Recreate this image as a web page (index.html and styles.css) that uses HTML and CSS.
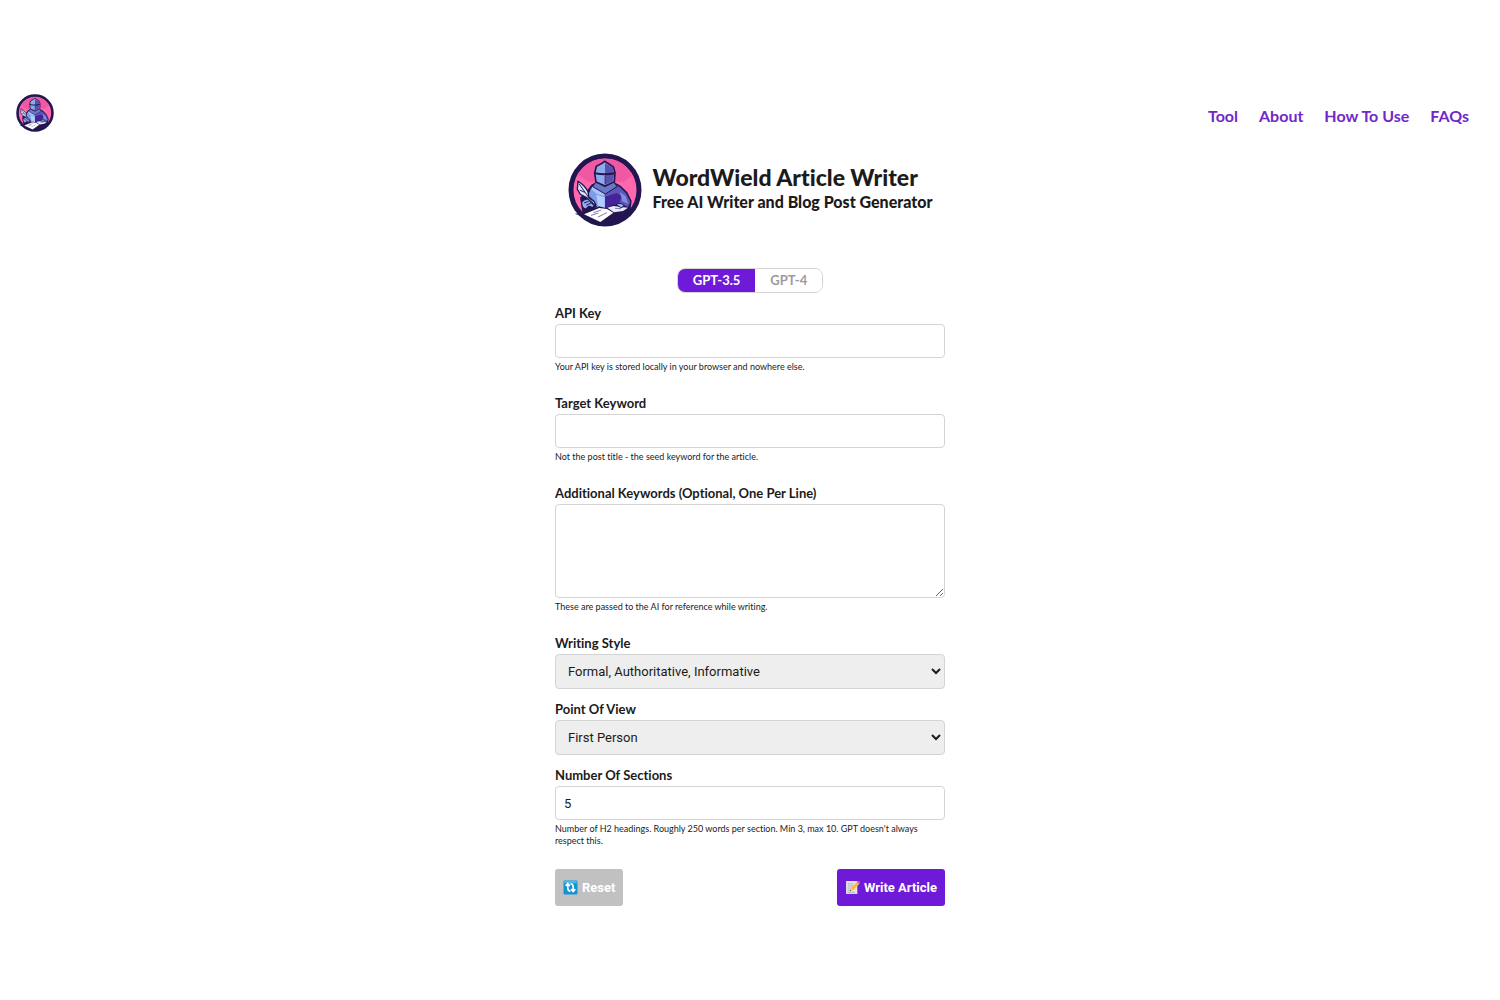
FILE: index.html
```html
<!DOCTYPE html>
<html lang="en">
<head>
<meta charset="UTF-8">
<meta name="viewport" content="width=device-width, initial-scale=1.0">
<title>WordWield Article Writer</title>
<link rel="stylesheet" href="styles.css">
</head>
<body>

<!-- scribe emblem, used in the header and next to the title -->
<svg class="sprite" aria-hidden="true">
  <symbol id="scribe" viewBox="22 24 222 222">
    <circle cx="133" cy="135" r="102" fill="#ff68ac" stroke="#231650" stroke-width="15"/>
    <path d="M50 88Q86 41 133 41Q190 41 214 92L190 110H82Z" fill="#f158a4"/>
    <path d="M58 158L77 140 92 119 108 110H158L180 122 200 142 213 168 208 205 154 214 66 207Z" fill="#231650"/>
    <path d="M94 126L108 116 132 133 132 188 111 187 94 164 84 149Z" fill="#a9c5fa"/>
    <path d="M91 132L108 146 133 154V188L105 188 95 165 83 153Z" fill="#7e9ce8"/>
    <path d="M107 149L132 157V188H113Z" fill="#b2ccff"/>
    <path d="M133 133L157 115 178 127 196 145 209 170 202 187 177 174 154 181 133 188Z" fill="#5e55b7"/>
    <path d="M133 155L168 144 183 153 175 176 133 190Z" fill="#43249a"/>
    <path d="M178 141L195 154 203 177 185 169Z" fill="#7e8fdd"/>
    <path d="M106 110L132 124 158 108 169 125 134 147 96 125Z" fill="#6977c9" stroke="#231650" stroke-width="3"/>
    <path d="M107 64Q124 56 132 49Q145 57 158 66L163 83 161 110 133 123 106 111 102 84Z" fill="#8faaeb" stroke="#231650" stroke-width="5"/>
    <path d="M133 55L156 67 160 84 158 108 133 119Z" fill="#5b50ab"/>
    <path d="M103 82Q132 88 161 82V88Q132 94 103 88Z" fill="#231650"/>
    <path d="M133 93V118" stroke="#231650" stroke-width="2"/>
    <path d="M63 170Q75 158 89 163L105 178 96 188 85 184 75 193Q61 188 63 170Z" fill="#91aff1" stroke="#231650" stroke-width="4"/>
    <path d="M70 174L84 169M76 181L91 174" stroke="#231650" stroke-width="3"/>
    <path d="M52 109Q71 119 82 140L84 155 101 170 107 187 94 175 80 159 59 148 50 133Z" fill="#dce8ff" stroke="#231650" stroke-width="4"/>
    <path d="M55 116L78 149 105 185M57 135L72 142" stroke="#231650" stroke-width="3" fill="none"/>
    <path d="M42 206L77 203 115 184 135 189 158 179 210 187 196 200 210 202 190 224 131 238 86 222Z" fill="#231650"/>
    <path d="M70 208L116 189 139 192 158 203 119 231Z" fill="#fff"/>
    <path d="M140 188L158 183 202 188 187 198 160 202Z" fill="#e5eaff"/>
    <path d="M98 203L122 195M91 211L113 204M112 216L139 203M163 190L181 191" stroke="#837bae" stroke-width="3"/>
    <path d="M166 178Q184 170 191 184L180 188Z" fill="#9baeea" stroke="#231650" stroke-width="3"/>
  </symbol>
</svg>

<header class="site-header">
  <a href="#tool" class="logo-link" aria-label="WordWield"><svg class="logo-small"><use href="#scribe"/></svg></a>
  <nav class="nav">
    <a href="#tool">Tool</a>
    <a href="#about">About</a>
    <a href="#how">How To Use</a>
    <a href="#faqs">FAQs</a>
  </nav>
</header>

<main id="tool">
  <div class="hero">
    <svg class="logo-big" aria-hidden="true"><use href="#scribe"/></svg>
    <div class="hero-text">
      <h1>WordWield Article Writer</h1>
      <h2>Free AI Writer and Blog Post Generator</h2>
    </div>
  </div>

  <form class="writer">
    <div class="model-switch">
      <button type="button" class="model active">GPT-3.5</button>
      <button type="button" class="model">GPT-4</button>
    </div>

    <div class="field with-note">
      <label for="apiKey">API Key</label>
      <input id="apiKey" type="password">
      <small>Your API key is stored locally in your browser and nowhere else.</small>
    </div>

    <div class="field with-note">
      <label for="keyword">Target Keyword</label>
      <input id="keyword" type="text">
      <small>Not the post title - the seed keyword for the article.</small>
    </div>

    <div class="field with-note">
      <label for="extra">Additional Keywords (Optional, One Per Line)</label>
      <textarea id="extra"></textarea>
      <small>These are passed to the AI for reference while writing.</small>
    </div>

    <div class="field">
      <label for="style">Writing Style</label>
      <select id="style">
        <option>Formal, Authoritative, Informative</option>
      </select>
    </div>

    <div class="field">
      <label for="pov">Point Of View</label>
      <select id="pov">
        <option>First Person</option>
      </select>
    </div>

    <div class="field with-note">
      <label for="sections">Number Of Sections</label>
      <input id="sections" type="number" min="3" max="10" value="5">
      <small>Number of H2 headings. Roughly 250 words per section. Min 3, max 10. GPT doesn't always respect this.</small>
    </div>

    <div class="actions">
      <button type="reset" class="btn btn-reset">
        <svg class="icon" viewBox="0 0 28 28" aria-hidden="true">
          <rect x="1" y="1" width="26" height="26" rx="2" fill="#1592d2"/>
          <path d="M2 4Q2 2 4 2H24Q26 2 26 4V6H2Z" fill="#46b9ed"/>
          <path d="M14 21Q9 21 9 15V9M5 11L9 6.500 13 11M14 7Q19 7 19 13V19M15 17L19 21.500 23 17" fill="none" stroke="#fff" stroke-width="3"/>
        </svg>
        Reset
      </button>
      <button type="button" class="btn btn-write">
        <svg class="icon" viewBox="0 0 28 28" aria-hidden="true">
          <path d="M2 2H23V26H2Z" fill="#e4e7ea"/>
          <path d="M5 7H16M5 11H15M5 15H12M5 19H10M5 23H19" stroke="#a0a8b5" stroke-width="1.500"/>
          <path d="M9 21L11 15 22 4 26 8 15 19Z" fill="#ffb52e"/>
          <path d="M22 4L24 2Q26 1 27 3T28 6L26 8Z" fill="#ef6287"/>
          <path d="M20.500 5.500L22 4 26 8 24.500 9.500Z" fill="#b8c3cc"/>
          <path d="M9 21L11 15 15 19Z" fill="#f3d7a2"/>
          <path d="M9 21L10 18 12 20Z" fill="#444"/>
        </svg>
        Write Article
      </button>
    </div>
  </form>
</main>

<script>
const models = document.querySelectorAll('.model');
models.forEach(m => m.addEventListener('click', () => {
  models.forEach(x => x.classList.remove('active'));
  m.classList.add('active');
}));
</script>

</body>
</html>
```
FILE: styles.css
```css
:root {
  --accent:#6f1ad8; --nav:#7228c8; --text:#1b1b1b; --border:#d4d4d4; --muted:#9b9b9f;
}
*{box-sizing:border-box}
body{margin:0;padding:94px 0 32px;font-family:Lato,"Liberation Sans",sans-serif;font-variant-ligatures:none;background:#fff;color:var(--text)}
.sprite{display:none}

.site-header{display:flex;justify-content:space-between;align-items:center;padding:0 31px 0 16px}
.logo-link{display:flex}
.logo-small{width:38px;height:38px}
.nav{display:flex;gap:21px;padding-top:6px}
.nav a{color:var(--nav);font-size:16px;line-height:20px;font-weight:700;text-decoration:none}

.hero{display:flex;justify-content:center;align-items:center;gap:11px;margin-top:21px}
.logo-big{width:74px;height:74px}
.hero-text{padding-bottom:4px}
h1,h2{margin:0;font-weight:900}
h1{font-size:23px;line-height:28px}
h2{font-size:16px;line-height:22px}

.writer{max-width:390px;margin:41px auto 0}
.model-switch{display:flex;width:max-content;margin:0 auto 12px;border:1px solid var(--border);border-radius:8px;overflow:hidden}
.model{padding:0 15px;border:none;background:#fff;color:var(--muted);font:700 13px/23px Lato,"Liberation Sans",sans-serif}
.model.active{background:var(--accent);color:#fff}

.field{display:flex;flex-direction:column;gap:3px;margin-bottom:12px}
.with-note{margin-bottom:22px}
label{font-size:13px;line-height:16px;font-weight:700}
small{font-size:9px;line-height:12px}
input,textarea,select{width:100%;border:1px solid var(--border);border-radius:4px;font:13px Roboto,"Liberation Sans",sans-serif;color:var(--text)}
input,textarea{padding:8px;background:#fff}
input{height:34px}
textarea{height:94px}
select{height:35px;padding:0 8px;background:#eee}

.actions{display:flex;justify-content:space-between;align-items:center}
.btn{display:flex;align-items:center;gap:4px;height:37px;padding:0 8px;border:none;border-radius:3px;color:#fff;font:700 13px Roboto,"Liberation Sans",sans-serif}
.btn-reset{background:#c1c1c1}
.btn-write{background:var(--accent)}
.icon{width:15px;height:15px}
```
